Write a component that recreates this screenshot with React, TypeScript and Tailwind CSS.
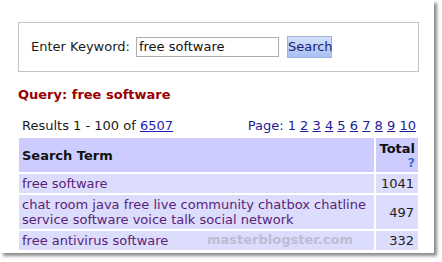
import React from "react";

const ROWS = [
  { term: "free software", total: 1041 },
  {
    term: "chat room java free live community chatbox chatline service software voice talk social network",
    total: 497,
  },
  { term: "free antivirus software", total: 332 },
];

const PAGES = [2, 3, 4, 5, 6, 7, 8, 9, 10];

function SearchBox() {
  return (
    <div className="flex h-[50px] w-[401px] items-center border border-[#c3c3c3] pl-[12px]">
      <span className="mr-[6px]">Enter Keyword:</span>
      <div className="flex h-[20px] w-[143px] items-center border border-[#a7aeb4] pl-[2px] text-[#111]">
        free software
      </div>
      <button className="ml-[8px] h-[22px] w-[45px] border border-[#9fb3e0] bg-gradient-to-b from-[#d3e0fb] to-[#a9c0f1] text-[13px] text-[#1b2275]">
        Search
      </button>
    </div>
  );
}

function ResultsBar() {
  return (
    <div className="flex w-[398px] items-center justify-between pl-[4px] leading-[16px]">
      <span>
        Results 1 - 100 of <a className="text-[#1f1fb5] underline">6507</a>
      </span>
      <span className="text-[#1c1c9a]">
        Page: 1{" "}
        {PAGES.map((p) => (
          <React.Fragment key={p}>
            <a className="underline">{p}</a>{p < 10 ? " " : ""}
          </React.Fragment>
        ))}
      </span>
    </div>
  );
}

function ResultsTable() {
  return (
    <div className="relative -ml-[1px] mt-[2px]">
      <table className="w-[403px] border-separate border-spacing-[2px] leading-[15px]">
        <thead>
          <tr className="bg-[#ccccff]">
            <th className="h-[34px] px-[3px] text-left align-middle font-bold text-[#111]">Search Term</th>
            <th className="w-[38px] px-[3px] py-[2px] text-right font-bold text-[#111]">
              Total
              <div className="text-[13px] font-bold leading-[14px] text-[#4a6fd0]">?</div>
            </th>
          </tr>
        </thead>
        <tbody>
          {ROWS.map((r) => (
            <tr key={r.total} className="bg-[#dcdcfc]">
              <td className="px-[3px] py-[2px] text-[#5a1f7a]">{r.term}</td>
              <td className="px-[4px] py-[2px] text-right align-middle text-[#222]">{r.total}</td>
            </tr>
          ))}
        </tbody>
      </table>
      <span className="absolute left-[190px] top-[94px] text-[13px] font-bold text-[#bcbcd4]">
        masterblogster.com
      </span>
    </div>
  );
}

export default function App() {
  return (
    <div className="h-[262px] w-[442px] bg-white font-['DejaVu_Sans',Verdana,sans-serif] text-[13px] text-[#1a1a1a]">
      <div className="h-[253px] w-[434px] bg-white pl-[18px] pt-[22px] shadow-[3px_3px_3px_rgba(0,0,0,0.45)]">
        <SearchBox />
        <div className="mt-[15px] font-bold leading-[16px] text-[#990000]">Query: free software</div>
        <div className="mt-[15px]">
          <ResultsBar />
        </div>
        <ResultsTable />
      </div>
    </div>
  );
}
